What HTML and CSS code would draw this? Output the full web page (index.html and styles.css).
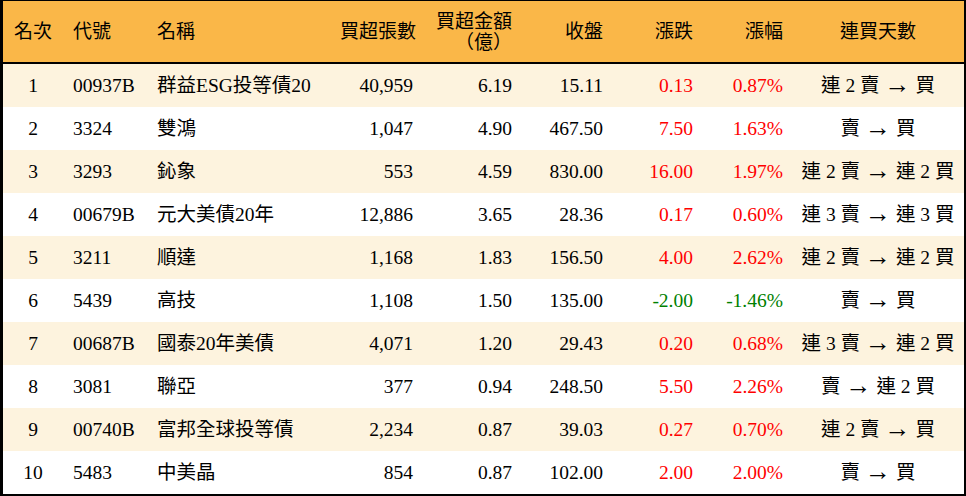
FILE: index.html
```html
<!DOCTYPE html>
<html lang="zh-Hant">
<head>
<meta charset="utf-8">
<link rel="stylesheet" href="styles.css">
</head>
<body>
<div class="board">
  <div class="row head">
    <div class="c c1">名次</div>
    <div class="c c2">代號</div>
    <div class="c c3">名稱</div>
    <div class="c c4">買超張數</div>
    <div class="c c5"><span>買超金額</span><span>（億）</span></div>
    <div class="c c6">收盤</div>
    <div class="c c7">漲跌</div>
    <div class="c c8">漲幅</div>
    <div class="c c9">連買天數</div>
  </div>
  <div class="row alt">
    <div class="c c1">1</div><div class="c c2">00937B</div><div class="c c3">群益ESG投等債20</div><div class="c c4">40,959</div><div class="c c5">6.19</div><div class="c c6">15.11</div><div class="c c7 up">0.13</div><div class="c c8 up">0.87%</div><div class="c c9">連 2 賣 <span class="arr">→</span> 買</div>
  </div>
  <div class="row">
    <div class="c c1">2</div><div class="c c2">3324</div><div class="c c3">雙鴻</div><div class="c c4">1,047</div><div class="c c5">4.90</div><div class="c c6">467.50</div><div class="c c7 up">7.50</div><div class="c c8 up">1.63%</div><div class="c c9">賣 <span class="arr">→</span> 買</div>
  </div>
  <div class="row alt">
    <div class="c c1">3</div><div class="c c2">3293</div><div class="c c3">鈊象</div><div class="c c4">553</div><div class="c c5">4.59</div><div class="c c6">830.00</div><div class="c c7 up">16.00</div><div class="c c8 up">1.97%</div><div class="c c9">連 2 賣 <span class="arr">→</span> 連 2 買</div>
  </div>
  <div class="row">
    <div class="c c1">4</div><div class="c c2">00679B</div><div class="c c3">元大美債20年</div><div class="c c4">12,886</div><div class="c c5">3.65</div><div class="c c6">28.36</div><div class="c c7 up">0.17</div><div class="c c8 up">0.60%</div><div class="c c9">連 3 賣 <span class="arr">→</span> 連 3 買</div>
  </div>
  <div class="row alt">
    <div class="c c1">5</div><div class="c c2">3211</div><div class="c c3">順達</div><div class="c c4">1,168</div><div class="c c5">1.83</div><div class="c c6">156.50</div><div class="c c7 up">4.00</div><div class="c c8 up">2.62%</div><div class="c c9">連 2 賣 <span class="arr">→</span> 連 2 買</div>
  </div>
  <div class="row">
    <div class="c c1">6</div><div class="c c2">5439</div><div class="c c3">高技</div><div class="c c4">1,108</div><div class="c c5">1.50</div><div class="c c6">135.00</div><div class="c c7 down">-2.00</div><div class="c c8 down">-1.46%</div><div class="c c9">賣 <span class="arr">→</span> 買</div>
  </div>
  <div class="row alt">
    <div class="c c1">7</div><div class="c c2">00687B</div><div class="c c3">國泰20年美債</div><div class="c c4">4,071</div><div class="c c5">1.20</div><div class="c c6">29.43</div><div class="c c7 up">0.20</div><div class="c c8 up">0.68%</div><div class="c c9">連 3 賣 <span class="arr">→</span> 連 2 買</div>
  </div>
  <div class="row">
    <div class="c c1">8</div><div class="c c2">3081</div><div class="c c3">聯亞</div><div class="c c4">377</div><div class="c c5">0.94</div><div class="c c6">248.50</div><div class="c c7 up">5.50</div><div class="c c8 up">2.26%</div><div class="c c9">賣 <span class="arr">→</span> 連 2 買</div>
  </div>
  <div class="row alt">
    <div class="c c1">9</div><div class="c c2">00740B</div><div class="c c3">富邦全球投等債</div><div class="c c4">2,234</div><div class="c c5">0.87</div><div class="c c6">39.03</div><div class="c c7 up">0.27</div><div class="c c8 up">0.70%</div><div class="c c9">連 2 賣 <span class="arr">→</span> 買</div>
  </div>
  <div class="row">
    <div class="c c1">10</div><div class="c c2">5483</div><div class="c c3">中美晶</div><div class="c c4">854</div><div class="c c5">0.87</div><div class="c c6">102.00</div><div class="c c7 up">2.00</div><div class="c c8 up">2.00%</div><div class="c c9">賣 <span class="arr">→</span> 買</div>
  </div>
</div>
</body>
</html>
```

FILE: styles.css
```css
html, body {
  margin: 0;
  padding: 0;
  background: #ffffff;
}

.board {
  width: 966px;
  height: 496px;
  box-sizing: border-box;
  border-top: 1px solid #000;
  border-left: 3px solid #000;
  border-right: 2px solid #000;
  border-bottom: 2px solid #000;
  font-family: "Liberation Serif", "Noto Sans CJK TC", serif;
  font-size: 19.5px;
  color: #000;
}

.row {
  display: grid;
  grid-template-columns: 60px 84px 193px 73px 99px 91px 90px 90px 181px;
  height: 43px;
  align-items: center;
  background: #ffffff;
}

.row.alt {
  background: #fdf3de;
}

.row.head {
  height: 61px;
  border-bottom: 2px solid #000;
  background: #fab748;
  font-size: 19px;
}

.c {
  white-space: nowrap;
  line-height: 22px;
}

.c1 { text-align: center; }
.c2, .c3 { text-align: left; padding-left: 10px; }
.c4, .c5, .c6, .c7, .c8 { text-align: right; }
.c9 { text-align: center; padding-left: 9px; }

.head .c5 {
  display: flex;
  flex-direction: column;
  align-items: flex-end;
  line-height: 21px;
  padding-top: 1px;
}

.arr {
  font-family: "Liberation Serif", serif;
  font-size: 26px;
  line-height: 0;
  vertical-align: -1px;
}

.up { color: #ff0000; }
.down { color: #008000; }
```
